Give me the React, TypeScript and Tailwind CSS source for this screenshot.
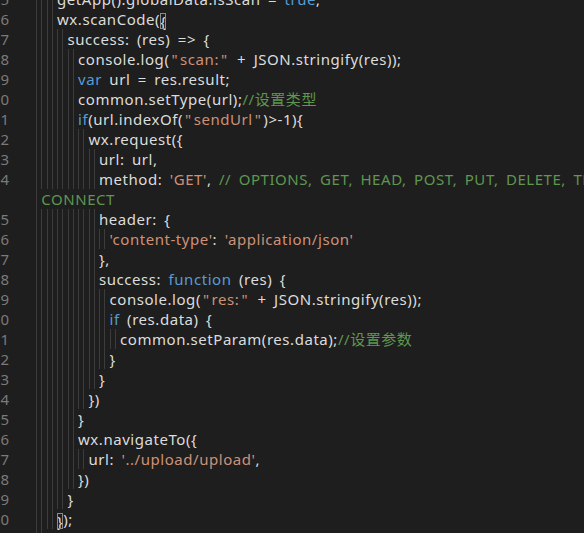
import React from 'react';

type Tok = [string, 'd' | 's' | 'c' | 'k' | 'b'];

const color: Record<string, string> = {
  d: 'text-[#dcdcdc]',
  s: 'text-[#ce9178]',
  c: 'text-[#5f9650]',
  k: 'text-[#569cd6]',
  b: 'text-[#dcdcdc] outline outline-[#8a8a8a] -outline-offset-1',
};

const lines: { n: number | null; ind: number; toks: Tok[] }[] = [
  { n: 5, ind: 4, toks: [['getApp().globalData.isScan = ', 'd'], ['true', 'k'], [';', 'd']] },
  { n: 6, ind: 4, toks: [['wx.scanCode(', 'd'], ['{', 'b']] },
  { n: 7, ind: 6, toks: [['success: (res) => {', 'd']] },
  { n: 8, ind: 8, toks: [['console.log(', 'd'], ['"scan:"', 's'], [' + JSON.stringify(res));', 'd']] },
  { n: 9, ind: 8, toks: [['var', 'k'], [' url = res.result;', 'd']] },
  { n: 10, ind: 8, toks: [['common.setType(url);', 'd'], ['//设置类型', 'c']] },
  { n: 11, ind: 8, toks: [['if', 'k'], ['(url.indexOf(', 'd'], ['"sendUrl"', 's'], [')>-1){', 'd']] },
  { n: 12, ind: 10, toks: [['wx.request({', 'd']] },
  { n: 13, ind: 12, toks: [['url: url,', 'd']] },
  {
    n: 14,
    ind: 12,
    toks: [['method: ', 'd'], ["'GET'", 's'], [', ', 'd'], ['// OPTIONS, GET, HEAD, POST, PUT, DELETE, TRACE,', 'c']],
  },
  { n: null, ind: 1, toks: [['CONNECT', 'c']] },
  { n: 15, ind: 12, toks: [['header: {', 'd']] },
  { n: 16, ind: 14, toks: [["'content-type'", 's'], [': ', 'd'], ["'application/json'", 's']] },
  { n: 17, ind: 12, toks: [['},', 'd']] },
  { n: 18, ind: 12, toks: [['success: ', 'd'], ['function', 'k'], [' (res) {', 'd']] },
  { n: 19, ind: 14, toks: [['console.log(', 'd'], ['"res:"', 's'], [' + JSON.stringify(res));', 'd']] },
  { n: 20, ind: 14, toks: [['if', 'k'], [' (res.data) {', 'd']] },
  { n: 21, ind: 16, toks: [['common.setParam(res.data);', 'd'], ['//设置参数', 'c']] },
  { n: 22, ind: 14, toks: [['}', 'd']] },
  { n: 23, ind: 12, toks: [['}', 'd']] },
  { n: 24, ind: 10, toks: [['})', 'd']] },
  { n: 25, ind: 8, toks: [['}', 'd']] },
  { n: 26, ind: 8, toks: [['wx.navigateTo({', 'd']] },
  { n: 27, ind: 10, toks: [['url: ', 'd'], ["'../upload/upload'", 's'], [',', 'd']] },
  { n: 28, ind: 8, toks: [['})', 'd']] },
  { n: 29, ind: 6, toks: [['}', 'd']] },
  { n: 30, ind: 4, toks: [['}', 'b'], [');', 'd']] },
  { n: 31, ind: 2, toks: [['}', 'd']] },
];

// double quotes sit wider in the editor font
function withQuotes(t: string) {
  const parts = t.split('"');
  return parts.map((p, i) => (
    <React.Fragment key={i}>
      {i > 0 && <span className="px-[2px]">"</span>}
      {p}
    </React.Fragment>
  ));
}

function Line({ n, ind, toks }: { n: number | null; ind: number; toks: Tok[] }) {
  return (
    <div className="flex h-[20px] items-stretch whitespace-pre">
      <div className="flex w-[9px] shrink-0 justify-end text-[#7a7a7a]">
        <span>{n ?? ''}</span>
      </div>
      <div className="w-[27px] shrink-0" />
      {Array.from({ length: ind }).map((_, i) => (
        <div key={i} className="w-[5.25px] shrink-0 border-l border-[#3c3c3c]" />
      ))}
      <div className="whitespace-pre leading-[20px] tracking-[0.55px] [word-spacing:3px]">
        {toks.map(([t, k], i) => (
          <span
            key={i}
            className={k === 'b' ? 'inline-block h-[16px] leading-[16px] align-[-2px] ' + color.b : color[k]}
          >
            {withQuotes(t)}
          </span>
        ))}
      </div>
    </div>
  );
}

export default function App() {
  return (
    <div
      className="h-[533px] w-[584px] overflow-hidden bg-[#1e1e1e] text-[15px] leading-[20px]"
      style={{ fontFamily: '"Noto Sans", "Noto Sans CJK SC", sans-serif' }}
    >
      <div className="-mt-[11px]">
        {lines.map((l, i) => (
          <Line key={i} {...l} />
        ))}
      </div>
    </div>
  );
}
